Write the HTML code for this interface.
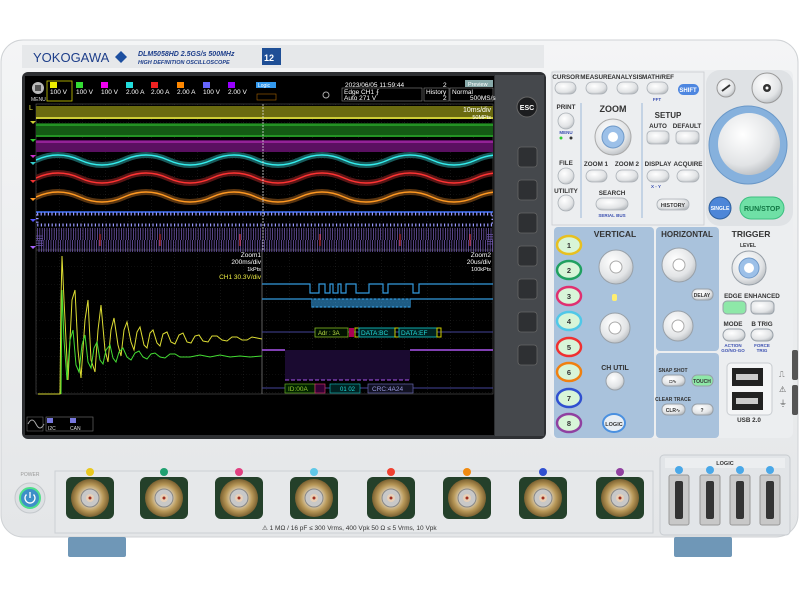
<!DOCTYPE html>
<html><head><meta charset="utf-8"><style>
html,body{margin:0;padding:0;background:#fff;width:800px;height:600px;overflow:hidden}
svg{display:block}
text{font-family:"Liberation Sans",sans-serif}
.l{font-size:6.3px;font-weight:bold;fill:#333;text-anchor:middle}
.s{font-size:4.5px;fill:#3a4fb0;text-anchor:middle;font-weight:bold}
</style></head><body>
<svg width="800" height="600" viewBox="0 0 800 600" xmlns="http://www.w3.org/2000/svg">
<defs>
<linearGradient id="body" x1="0" y1="0" x2="0" y2="1"><stop offset="0" stop-color="#f4f5f6"/><stop offset="1" stop-color="#e4e6e8"/></linearGradient>
<radialGradient id="knob" cx="0.4" cy="0.35" r="0.7"><stop offset="0" stop-color="#fff"/><stop offset="0.7" stop-color="#e2e4e6"/><stop offset="1" stop-color="#b8bcc0"/></radialGradient>
<radialGradient id="bnc" cx="0.5" cy="0.5" r="0.5"><stop offset="0" stop-color="#f0e0c0"/><stop offset="0.3" stop-color="#8a6a40"/><stop offset="0.45" stop-color="#d8c8a8"/><stop offset="0.7" stop-color="#b89858"/><stop offset="1" stop-color="#7a6030"/></radialGradient>
<pattern id="grid" x="36" y="104" width="23" height="18" patternUnits="userSpaceOnUse"><path d="M0,0H23M0,0V18" stroke="#3a3a3a" stroke-width="0.6" stroke-dasharray="1,2" fill="none"/></pattern>
<clipPath id="scr"><rect x="36" y="104" width="457" height="290"/></clipPath>
</defs>
<rect x="1" y="40" width="797" height="497" rx="22" fill="url(#body)" stroke="#cfd2d5"/>
<rect x="68" y="537" width="58" height="20" rx="2" fill="#6f97b7"/>
<rect x="674" y="537" width="58" height="20" rx="2" fill="#6f97b7"/>
<rect x="22" y="45" width="522" height="23" fill="#e6e8ea"/>
<text x="33" y="62" font-size="13" fill="#1d3e8a">YOKOGAWA</text>
<path d="M121,51 l6,6 -6,6 -6,-6z" fill="#1d4fa0"/>
<text x="138" y="56" font-size="7" font-style="italic" font-weight="bold" fill="#1d3e8a">DLM5058HD   2.5GS/s 500MHz</text>
<text x="138" y="64" font-size="5.5" font-style="italic" font-weight="bold" fill="#1d3e8a">HIGH DEFINITION OSCILLOSCOPE</text>
<rect x="262" y="48" width="19" height="17" fill="#1f4f96"/>
<text x="264" y="61" font-size="9" font-weight="bold" fill="#fff">12</text>
<rect x="22" y="72" width="524" height="367" rx="6" fill="#2e3033"/>
<rect x="495" y="75" width="49" height="361" fill="#45484c"/>
<rect x="25" y="76" width="469" height="359" fill="#000"/>
<circle cx="527" cy="107" r="10" fill="#1c1d1f" stroke="#666"/>
<text x="527" y="110" font-size="7" font-weight="bold" fill="#fff" text-anchor="middle">ESC</text>
<g fill="#2e3033" stroke="#666" stroke-width="0.8">
<rect x="518" y="147" width="19" height="20" rx="3"/><rect x="518" y="180" width="19" height="20" rx="3"/><rect x="518" y="213" width="19" height="20" rx="3"/><rect x="518" y="246" width="19" height="20" rx="3"/><rect x="518" y="279" width="19" height="20" rx="3"/><rect x="518" y="312" width="19" height="20" rx="3"/><rect x="518" y="345" width="19" height="20" rx="3"/></g>
<circle cx="38" cy="88" r="6" fill="#bbb"/><rect x="35" y="85" width="6" height="6" fill="#555"/>
<text x="31" y="101" font-size="5" fill="#ddd">MENU</text>
<g font-family="Liberation Mono,monospace" font-size="6.5" fill="#fff">
<rect x="47" y="81" width="25" height="20" fill="none" stroke="#cc0" stroke-width="0.8"/>
<rect x="50" y="82" width="7" height="6" fill="#ee0"/><text x="50" y="94">100 V</text>
<rect x="76" y="82" width="7" height="6" fill="#3d3"/><text x="76" y="94">100 V</text>
<rect x="101" y="82" width="7" height="6" fill="#e0e"/><text x="101" y="94">100 V</text>
<rect x="126" y="82" width="7" height="6" fill="#2dd"/><text x="126" y="94">2.00 A</text>
<rect x="151" y="82" width="7" height="6" fill="#e22"/><text x="151" y="94">2.00 A</text>
<rect x="177" y="82" width="7" height="6" fill="#f80"/><text x="177" y="94">2.00 A</text>
<rect x="203" y="82" width="7" height="6" fill="#66f"/><text x="203" y="94">100 V</text>
<rect x="228" y="82" width="7" height="6" fill="#90f"/><text x="228" y="94">2.00 V</text>
<rect x="256" y="82" width="20" height="6" fill="#39e"/><text x="258" y="87" font-size="5">Logic</text>
<rect x="257" y="94" width="19" height="6" fill="none" stroke="#a60" stroke-width="0.6"/>
<text x="345" y="87">2023/06/05 11:59:44</text>
<rect x="342" y="88" width="80" height="13" fill="none" stroke="#888" stroke-width="0.6"/>
<text x="344" y="94">Edge CH1 ⨍</text><text x="344" y="100">Auto 271 V</text>
<rect x="424" y="88" width="25" height="13" fill="none" stroke="#888" stroke-width="0.6"/>
<text x="426" y="94">History</text><text x="443" y="100">2</text><text x="443" y="87">2</text>
<rect x="450" y="88" width="43" height="13" fill="none" stroke="#888" stroke-width="0.6"/>
<text x="452" y="94">Normal</text><text x="470" y="100">500MS/s</text>
<rect x="465" y="80" width="28" height="7" fill="#8aa"/><text x="468" y="86" font-size="5.5">Preview</text>
</g>
<circle cx="326" cy="95" r="3" fill="none" stroke="#aaa"/>
<rect x="36" y="104" width="457" height="290" fill="url(#grid)"/>
<rect x="36" y="104" width="457" height="290" fill="none" stroke="#555" stroke-width="0.6"/>
<line x1="262" y1="250" x2="262" y2="394" stroke="#777" stroke-width="0.8"/>
<line x1="36" y1="250" x2="493" y2="250" stroke="#666" stroke-width="0.6"/>
<rect x="36" y="106" width="457" height="13" fill="#6a6a10"/><line x1="36" y1="118" x2="493" y2="118" stroke="#ee4" stroke-width="1.5"/>
<rect x="36" y="123" width="457" height="14" fill="#145a14"/><line x1="36" y1="125" x2="493" y2="125" stroke="#3c3" stroke-width="1"/><line x1="36" y1="136" x2="493" y2="136" stroke="#3c3" stroke-width="1"/>
<rect x="36" y="140" width="457" height="12" fill="#5a1060"/><line x1="36" y1="142" x2="493" y2="142" stroke="#c3c" stroke-width="1"/>
<g fill="none" stroke-linecap="round" clip-path="url(#scr)">
<path d="M36,160 q22,-10 44,0 t44,0 t44,0 t44,0 t44,0 t44,0 t44,0 t44,0 t44,0 t44,0 t44,0" stroke="#185a5a" stroke-width="6"/>
<path d="M36,160 q22,-10 44,0 t44,0 t44,0 t44,0 t44,0 t44,0 t44,0 t44,0 t44,0 t44,0 t44,0" stroke="#3ee" stroke-width="1.4"/>
<path d="M36,178 q22,-10 44,0 t44,0 t44,0 t44,0 t44,0 t44,0 t44,0 t44,0 t44,0 t44,0 t44,0" stroke="#5a1515" stroke-width="6"/>
<path d="M36,178 q22,-10 44,0 t44,0 t44,0 t44,0 t44,0 t44,0 t44,0 t44,0 t44,0 t44,0 t44,0" stroke="#f33" stroke-width="1.4"/>
<path d="M36,197 q22,-10 44,0 t44,0 t44,0 t44,0 t44,0 t44,0 t44,0 t44,0 t44,0 t44,0 t44,0" stroke="#5a3510" stroke-width="6"/>
<path d="M36,197 q22,-10 44,0 t44,0 t44,0 t44,0 t44,0 t44,0 t44,0 t44,0 t44,0 t44,0 t44,0" stroke="#f92" stroke-width="1.4"/>
</g>
<line x1="36" y1="212" x2="493" y2="212" stroke="#47f" stroke-width="1.5"/>
<rect x="37" y="214" width="456" height="11" fill="none" stroke="#99f" stroke-width="3" stroke-dasharray="1.2,2.4" clip-path="url(#scr)"/>
<rect x="37" y="234" width="456" height="12" fill="none" stroke="#97e" stroke-width="12" stroke-dasharray="0.8,1.6" stroke-opacity="0.7" clip-path="url(#scr)"/>
<g stroke="#e33" stroke-width="1"><line x1="100" y1="234" x2="100" y2="246"/><line x1="160" y1="234" x2="160" y2="246"/><line x1="240" y1="234" x2="240" y2="246"/><line x1="320" y1="234" x2="320" y2="246"/><line x1="400" y1="234" x2="400" y2="246"/><line x1="470" y1="234" x2="470" y2="246"/></g>
<line x1="263" y1="104" x2="263" y2="250" stroke="#ddd" stroke-width="0.8" stroke-dasharray="2,1"/>
<text x="491" y="112" font-size="7" fill="#fff" text-anchor="end" font-family="Liberation Mono,monospace">10ms/div</text>
<text x="491" y="119" font-size="5.5" fill="#fff" text-anchor="end">50MPts</text>
<text x="29" y="110" font-size="7" fill="#ee4">L</text>
<path d="M30,121h6l-3,3z" fill="#cc3"/><path d="M30,139h6l-3,3z" fill="#3c3"/><path d="M30,155h6l-3,3z" fill="#c3c"/><path d="M30,162h6l-3,3z" fill="#3cc"/><path d="M30,180h6l-3,3z" fill="#e33"/><path d="M30,198h6l-3,3z" fill="#f92"/><path d="M30,219h6l-3,3z" fill="#55f"/><path d="M30,246h6l-3,3z" fill="#a6f"/>
<g font-size="6.5" fill="#fff" text-anchor="end">
<text x="261" y="257">Zoom1</text><text x="261" y="264">200ms/div</text><text x="261" y="271" font-size="5.5">1kPts</text>
<text x="261" y="279" fill="#ee4">CH1  30.3V/div</text>
<text x="491" y="257">Zoom2</text><text x="491" y="264">20us/div</text><text x="491" y="271" font-size="5.5">100kPts</text></g>
<polyline fill="none" stroke="#dd3" stroke-width="1" points="38,394 60,394 61,300 62,256 64,300 68,380 72,300 75,290 78,350 81,378 85,320 88,300 91,360 95,372 98,330 101,305 105,350 108,362 111,330 114,318 118,345 121,356 124,330 127,322 131,342 134,350 137,332 140,327 144,345 147,348 150,333 153,330 157,343 160,346 163,334 167,332 171,342 175,344 179,335 183,333 187,342 191,343 195,336 199,335 203,341 208,342 212,336 217,336 222,340 227,341 232,337 237,337 242,340 247,340 252,337 257,338 262,339"/>
<polyline fill="none" stroke="#4d3" stroke-width="1" points="61,394 62,290 64,340 67,380 70,340 73,330 76,365 79,372 82,345 85,335 88,362 91,368 94,348 97,342 100,360 103,364 106,350 110,345 113,358 116,362 119,352 123,348 127,357 131,360 135,353 139,351 143,357 147,359 151,354 155,353 160,357 165,358 170,354 175,354 180,357 190,357 200,355 210,357 220,355 230,357 240,356 250,357 262,356"/>
<g fill="none" stroke-width="1.2">
<path d="M262,284H310v9h9v-9h6v9h5v-9h3v9h5v-9h3v9h5v-9h10v9h13v-9h14v9h5v-9h25v9h6v-9H493" stroke="#39d"/>
<path d="M262,299H312v8h2v-8h2v8h2v-8h2v8h2v-8h2v8h2v-8h2v8h2v-8h2v8h2v-8h2v8h2v-8h2v8h2v-8h2v8h2v-8h2v8h2v-8h2v8h2v-8h2v8h2v-8h2v8h2v-8h2v8h2v-8h2v8h2v-8h2v8h2v-8h2v8h2v-8h2v8h2v-8h2v8h2v-8h2v8h2v-8h2v8h2v-8h2v8h2v-8h2v8h2v-8h2v8h2v-8h2v8h2v-8H493" stroke="#39d"/>
</g>
<line x1="262" y1="332" x2="493" y2="332" stroke="#449" stroke-width="1"/>
<rect x="315" y="328" width="33" height="9" fill="#010" stroke="#8b2" stroke-width="0.8"/><text x="318" y="335" font-size="6" fill="#bd4">Adr : 3A</text>
<rect x="349" y="328" width="5" height="9" fill="#a05"/><rect x="355" y="328" width="4" height="9" fill="none" stroke="#cc0"/>
<rect x="359" y="328" width="36" height="9" fill="#022" stroke="#1aa"/><text x="361" y="335" font-size="6.5" fill="#2dd">DATA:BC</text>
<rect x="395" y="328" width="4" height="9" fill="none" stroke="#cc0"/>
<rect x="399" y="328" width="38" height="9" fill="#022" stroke="#1aa"/><text x="401" y="335" font-size="6.5" fill="#2dd">DATA:EF</text>
<rect x="437" y="328" width="4" height="9" fill="none" stroke="#cc0"/>
<line x1="262" y1="350" x2="285" y2="350" stroke="#a5e" stroke-width="1.5"/><line x1="410" y1="350" x2="493" y2="350" stroke="#a5e" stroke-width="1.5"/>
<rect x="285" y="350" width="125" height="30" fill="#1a0a30"/>
<line x1="285" y1="380" x2="410" y2="380" stroke="#a5e" stroke-width="1" stroke-dasharray="4,2"/>
<line x1="262" y1="388" x2="493" y2="388" stroke="#449" stroke-width="1"/>
<rect x="285" y="384" width="30" height="9" fill="#020" stroke="#6a2" stroke-width="0.7"/><text x="288" y="391" font-size="6.5" fill="#9c3">ID:00A</text>
<rect x="315" y="384" width="10" height="9" fill="#303" stroke="#c36" stroke-width="0.7"/>
<rect x="330" y="384" width="30" height="9" fill="#022" stroke="#1aa" stroke-width="0.7"/><text x="340" y="391" font-size="6" fill="#2dd">01 02</text>
<rect x="368" y="384" width="45" height="9" fill="#112" stroke="#66a" stroke-width="0.7"/><text x="372" y="391" font-size="6.5" fill="#99d">CRC:4A24</text>
<path d="M28,424 q4,-8 8,0 t8,0" fill="none" stroke="#aaa"/><rect x="27" y="417" width="16" height="14" fill="none" stroke="#666" stroke-width="0.6"/>
<rect x="46" y="417" width="47" height="14" fill="none" stroke="#777" stroke-width="0.6"/>
<rect x="47" y="418" width="6" height="5" fill="#77d"/><rect x="70" y="418" width="6" height="5" fill="#77d"/>
<text x="48" y="430" font-size="5" fill="#ddd">I2C</text><text x="70" y="430" font-size="5" fill="#ddd">CAN</text>
<!-- right control panel -->
<rect x="550" y="70" width="243" height="368" rx="6" fill="#eceef0"/>
<rect x="706" y="70" width="87" height="156" rx="14" fill="#dfe2e5"/>
<rect x="552" y="72" width="152" height="153" fill="none" stroke="#c8ccd0" stroke-width="0.8"/>
<line x1="581" y1="103" x2="581" y2="218" stroke="#9bb8d8" stroke-width="1"/><line x1="642" y1="103" x2="642" y2="218" stroke="#9bb8d8" stroke-width="1"/>
<g class="l">
<text x="566" y="79">CURSOR</text><text x="596" y="79">MEASURE</text><text x="627" y="79">ANALYSIS</text><text x="658" y="79">MATH/REF</text>
<text x="566" y="109">PRINT</text><text x="566" y="165">FILE</text><text x="566" y="193">UTILITY</text>
<text x="613" y="112" style="font-size:9px">ZOOM</text><text x="596" y="166">ZOOM 1</text><text x="627" y="166">ZOOM 2</text><text x="612" y="195">SEARCH</text>
<text x="668" y="118" style="font-size:8px">SETUP</text><text x="658" y="128">AUTO</text><text x="687" y="128">DEFAULT</text><text x="658" y="166">DISPLAY</text><text x="688" y="166">ACQUIRE</text>
</g>
<g fill="url(#knob)" stroke="#aab0b6" stroke-width="0.8">
<rect x="555" y="82" width="21" height="12" rx="6"/><rect x="586" y="82" width="21" height="12" rx="6"/><rect x="617" y="82" width="21" height="12" rx="6"/><rect x="647" y="82" width="21" height="12" rx="6"/>
<circle cx="566" cy="121" r="8"/><circle cx="566" cy="176" r="8"/><circle cx="566" cy="203" r="8"/>
<rect x="586" y="170" width="21" height="12" rx="6"/><rect x="616" y="170" width="22" height="12" rx="6"/><rect x="596" y="198" width="32" height="12" rx="6"/>
<rect x="647" y="131" width="22" height="13" rx="4"/><rect x="676" y="131" width="23" height="13" rx="4"/>
<rect x="647" y="170" width="22" height="12" rx="6"/><rect x="677" y="170" width="22" height="12" rx="6"/>
<rect x="657" y="199" width="32" height="11" rx="5"/>
</g>
<rect x="678" y="84" width="21" height="11" rx="5.5" fill="#4d86e0"/><text x="688" y="92" font-size="6" font-weight="bold" fill="#fff" text-anchor="middle">SHIFT</text>
<g class="s"><text x="657" y="101">FFT</text><text x="566" y="134">MENU</text><text x="612" y="217">SERIAL BUS</text><text x="656" y="188">X - Y</text></g>
<text x="673" y="207" font-size="5.5" font-weight="bold" fill="#333" text-anchor="middle">HISTORY</text>
<circle cx="613" cy="137" r="18" fill="url(#knob)" stroke="#aaa"/><circle cx="613" cy="137" r="11" fill="#9cc0e8" stroke="#6f99c8"/><circle cx="613" cy="137" r="5" fill="#fff"/>
<circle cx="561" cy="138" r="1.5" fill="#3c3"/><circle cx="571" cy="138" r="1.5" fill="#333"/>
<circle cx="726" cy="88" r="9" fill="url(#knob)" stroke="#999"/><line x1="722" y1="91" x2="730" y2="85" stroke="#333" stroke-width="2"/>
<circle cx="767" cy="88" r="15" fill="url(#knob)" stroke="#999"/><circle cx="767" cy="88" r="4" fill="#333"/><circle cx="767" cy="88" r="1.5" fill="#fff"/>
<circle cx="748" cy="145" r="39" fill="#86b1dd" stroke="#6a98c8"/><circle cx="749" cy="144" r="31" fill="url(#knob)"/>
<circle cx="720" cy="208" r="11" fill="#4d86d8" stroke="#2e5f9c"/><text x="720" y="210" font-size="5" font-weight="bold" fill="#fff" text-anchor="middle">SINGLE</text>
<rect x="740" y="197" width="44" height="22" rx="11" fill="#6fe0a6" stroke="#3cbf80"/><text x="762" y="211" font-size="7" font-weight="bold" fill="#174" text-anchor="middle">RUN/STOP</text>
<rect x="554" y="227" width="100" height="211" rx="4" fill="#a9c2dc"/>
<rect x="656" y="227" width="63" height="124" rx="4" fill="#a9c2dc"/>
<rect x="656" y="353" width="63" height="85" rx="4" fill="#a9c2dc"/>
<g class="l"><text x="615" y="237" style="font-size:8.5px">VERTICAL</text><text x="687" y="237" style="font-size:8px">HORIZONTAL</text><text x="751" y="237" style="font-size:8.5px">TRIGGER</text>
<text x="615" y="370" style="font-size:7px">CH UTIL</text><text x="733" y="298">EDGE</text><text x="762" y="298">ENHANCED</text><text x="733" y="326">MODE</text><text x="762" y="326">B TRIG</text><text x="749" y="422">USB 2.0</text><text x="748" y="247" style="font-size:5px">LEVEL</text>
<text x="673" y="372" style="font-size:5px">SNAP SHOT</text><text x="673" y="401" style="font-size:5px">CLEAR TRACE</text></g>
<g>
<ellipse cx="569" cy="245" rx="12" ry="9" fill="#d8f5d8" stroke="#e8c020" stroke-width="2.5"/>
<ellipse cx="569" cy="270" rx="12" ry="9" fill="#d8f5d8" stroke="#20a060" stroke-width="2.5"/>
<ellipse cx="569" cy="296" rx="12" ry="9" fill="#d8f5d8" stroke="#e03070" stroke-width="2.5"/>
<ellipse cx="569" cy="321" rx="12" ry="9" fill="#d8f5d8" stroke="#50c8e8" stroke-width="2.5"/>
<ellipse cx="569" cy="347" rx="12" ry="9" fill="#d8f5d8" stroke="#f03030" stroke-width="2.5"/>
<ellipse cx="569" cy="372" rx="12" ry="9" fill="#d8f5d8" stroke="#f08010" stroke-width="2.5"/>
<ellipse cx="569" cy="398" rx="12" ry="9" fill="#d8f5d8" stroke="#3050d0" stroke-width="2.5"/>
<ellipse cx="569" cy="423" rx="12" ry="9" fill="#d8f5d8" stroke="#9040a0" stroke-width="2.5"/>
</g>
<g font-size="7.5" font-weight="bold" fill="#333" text-anchor="middle"><text x="569" y="248">1</text><text x="569" y="273">2</text><text x="569" y="299">3</text><text x="569" y="324">4</text><text x="569" y="350">5</text><text x="569" y="375">6</text><text x="569" y="401">7</text><text x="569" y="426">8</text></g>
<g fill="url(#knob)" stroke="#98a0a8">
<circle cx="616" cy="267" r="17"/><circle cx="615" cy="328" r="15"/><circle cx="679" cy="265" r="17"/><circle cx="678" cy="326" r="15"/><circle cx="749" cy="268" r="17"/>
<circle cx="615" cy="381" r="9"/>
<rect x="692" y="289" width="21" height="11" rx="5"/><rect x="723" y="301" width="23" height="13" rx="4" fill="#8ee8a8"/><rect x="751" y="301" width="23" height="13" rx="4"/>
<rect x="723" y="329" width="22" height="12" rx="6"/><rect x="751" y="329" width="22" height="12" rx="6"/>
<rect x="662" y="375" width="23" height="11" rx="5"/><rect x="692" y="375" width="21" height="11" rx="5" fill="#8ee8a8"/>
<rect x="662" y="404" width="23" height="11" rx="5"/><rect x="692" y="404" width="21" height="11" rx="5"/>
</g>
<circle cx="749" cy="268" r="10" fill="#9cc0e8" stroke="#6f99c8"/><circle cx="749" cy="268" r="5" fill="#fff"/>
<g fill="#fff" stroke="#aaa"><circle cx="616" cy="267" r="6"/><circle cx="615" cy="328" r="6"/><circle cx="679" cy="265" r="6"/><circle cx="678" cy="326" r="6"/></g>
<ellipse cx="614" cy="423" rx="11" ry="9" fill="#e8eef4" stroke="#4a90e0" stroke-width="2"/><text x="614" y="426" font-size="5.5" font-weight="bold" fill="#333" text-anchor="middle">LOGIC</text>
<rect x="612" y="294" width="5" height="7" rx="2" fill="#ffee70"/>
<g font-size="5" font-weight="bold" fill="#333" text-anchor="middle"><text x="702" y="297">DELAY</text><text x="702" y="383">TOUCH</text><text x="702" y="412">?</text><text x="673" y="383">◘∿</text><text x="673" y="412">CLR∿</text></g>
<g class="s"><text x="733" y="347">ACTION</text><text x="733" y="352">GO/NO-GO</text><text x="762" y="347">FORCE</text><text x="762" y="352">TRIG</text></g>
<rect x="727" y="363" width="45" height="52" rx="4" fill="#f4f5f6" stroke="#c8ccd0"/>
<rect x="732" y="368" width="31" height="18" fill="#222"/><rect x="736" y="374" width="22" height="6" fill="#ccc"/>
<rect x="732" y="392" width="31" height="18" fill="#222"/><rect x="736" y="398" width="22" height="6" fill="#ccc"/>
<text x="779" y="377" font-size="8" fill="#555">⎍</text><text x="779" y="392" font-size="8" fill="#555">⚠</text><text x="779" y="406" font-size="8" fill="#555">⏚</text>
<rect x="792" y="350" width="6" height="30" rx="2" fill="#555"/><rect x="792" y="385" width="6" height="30" rx="2" fill="#555"/>
<circle cx="30" cy="498" r="15" fill="#dde0e3" stroke="#c4c8cc"/><circle cx="30" cy="498" r="10" fill="#3d8fc8" stroke="#4ee08a" stroke-width="2"/>
<path d="M26.5,494.5 a5,5 0 1,0 7,0 M30,492v6" fill="none" stroke="#fff" stroke-width="1.3"/>
<text x="30" y="476" font-size="5" fill="#999" text-anchor="middle">POWER</text>
<rect x="55" y="471" width="598" height="62" fill="#e6e8ea" stroke="#ccd0d4"/>
<g>
<g transform="translate(90,498)"><circle cy="-26" r="4" fill="#e8c820"/><rect x="-24" y="-21" width="48" height="42" rx="6" fill="#24402a"/><circle r="19" fill="url(#bnc)"/><circle r="9" fill="#c8c8c8" stroke="#888"/><circle r="4" fill="#e8d0b8"/><circle r="1.5" fill="#a03020"/></g>
<g transform="translate(164,498)"><circle cy="-26" r="4" fill="#20a070"/><rect x="-24" y="-21" width="48" height="42" rx="6" fill="#24402a"/><circle r="19" fill="url(#bnc)"/><circle r="9" fill="#c8c8c8" stroke="#888"/><circle r="4" fill="#e8d0b8"/><circle r="1.5" fill="#a03020"/></g>
<g transform="translate(239,498)"><circle cy="-26" r="4" fill="#e04080"/><rect x="-24" y="-21" width="48" height="42" rx="6" fill="#24402a"/><circle r="19" fill="url(#bnc)"/><circle r="9" fill="#c8c8c8" stroke="#888"/><circle r="4" fill="#e8d0b8"/><circle r="1.5" fill="#a03020"/></g>
<g transform="translate(314,498)"><circle cy="-26" r="4" fill="#60c8e8"/><rect x="-24" y="-21" width="48" height="42" rx="6" fill="#24402a"/><circle r="19" fill="url(#bnc)"/><circle r="9" fill="#c8c8c8" stroke="#888"/><circle r="4" fill="#e8d0b8"/><circle r="1.5" fill="#a03020"/></g>
<g transform="translate(391,498)"><circle cy="-26" r="4" fill="#f04030"/><rect x="-24" y="-21" width="48" height="42" rx="6" fill="#24402a"/><circle r="19" fill="url(#bnc)"/><circle r="9" fill="#c8c8c8" stroke="#888"/><circle r="4" fill="#e8d0b8"/><circle r="1.5" fill="#a03020"/></g>
<g transform="translate(467,498)"><circle cy="-26" r="4" fill="#f08a10"/><rect x="-24" y="-21" width="48" height="42" rx="6" fill="#24402a"/><circle r="19" fill="url(#bnc)"/><circle r="9" fill="#c8c8c8" stroke="#888"/><circle r="4" fill="#e8d0b8"/><circle r="1.5" fill="#a03020"/></g>
<g transform="translate(543,498)"><circle cy="-26" r="4" fill="#3050d0"/><rect x="-24" y="-21" width="48" height="42" rx="6" fill="#24402a"/><circle r="19" fill="url(#bnc)"/><circle r="9" fill="#c8c8c8" stroke="#888"/><circle r="4" fill="#e8d0b8"/><circle r="1.5" fill="#a03020"/></g>
<g transform="translate(620,498)"><circle cy="-26" r="4" fill="#9040a0"/><rect x="-24" y="-21" width="48" height="42" rx="6" fill="#24402a"/><circle r="19" fill="url(#bnc)"/><circle r="9" fill="#c8c8c8" stroke="#888"/><circle r="4" fill="#e8d0b8"/><circle r="1.5" fill="#a03020"/></g>
</g>
<text x="262" y="530" font-size="6.5" fill="#333">⚠  1 MΩ / 16 pF ≤ 300 Vrms, 400 Vpk    50 Ω ≤ 5 Vrms, 10 Vpk</text>
<rect x="660" y="455" width="130" height="80" rx="4" fill="#e2e5e8" stroke="#c8ccd0"/>
<rect x="665" y="458" width="120" height="10" fill="#eceef0"/><text x="725" y="465" font-size="5.5" font-weight="bold" fill="#333" text-anchor="middle">LOGIC</text>
<g>
<g transform="translate(679,497)"><circle cy="-27" r="4" fill="#4aa8e8"/><rect x="-10" y="-22" width="20" height="50" rx="2" fill="#c8c8c8" stroke="#999"/><rect x="-4" y="-16" width="8" height="38" rx="2" fill="#333"/></g>
<g transform="translate(710,497)"><circle cy="-27" r="4" fill="#4aa8e8"/><rect x="-10" y="-22" width="20" height="50" rx="2" fill="#c8c8c8" stroke="#999"/><rect x="-4" y="-16" width="8" height="38" rx="2" fill="#333"/></g>
<g transform="translate(740,497)"><circle cy="-27" r="4" fill="#4aa8e8"/><rect x="-10" y="-22" width="20" height="50" rx="2" fill="#c8c8c8" stroke="#999"/><rect x="-4" y="-16" width="8" height="38" rx="2" fill="#333"/></g>
<g transform="translate(770,497)"><circle cy="-27" r="4" fill="#4aa8e8"/><rect x="-10" y="-22" width="20" height="50" rx="2" fill="#c8c8c8" stroke="#999"/><rect x="-4" y="-16" width="8" height="38" rx="2" fill="#333"/></g>
</g>
</svg>
</body></html>
